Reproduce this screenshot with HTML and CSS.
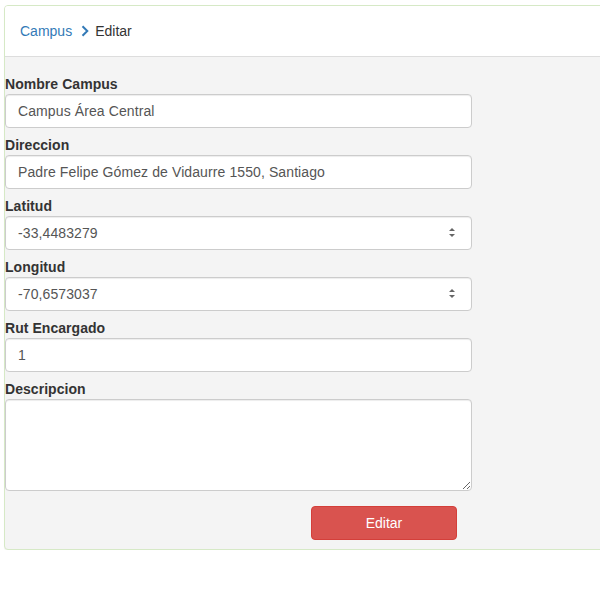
FILE: index.html
```html
<!DOCTYPE html>
<html lang="es">
<head>
<meta charset="utf-8">
<title>Editar Campus</title>
<link rel="stylesheet" href="styles.css">
</head>
<body>
<div class="panel">
  <div class="panel-heading">
    <a class="crumb-link" href="#">Campus</a>
    <svg class="chevron" width="8" height="12" viewBox="0 0 8 12"><path d="M1.5 1.2 L6.3 6 L1.5 10.8" fill="none" stroke="#337ab7" stroke-width="2"/></svg>
    <span class="crumb-current">Editar</span>
  </div>
  <div class="panel-body">
    <form class="form">
      <div class="form-group">
        <label class="label">Nombre Campus</label>
        <input class="control" type="text" value="Campus Área Central">
      </div>
      <div class="form-group">
        <label class="label">Direccion</label>
        <input class="control" type="text" value="Padre Felipe Gómez de Vidaurre 1550, Santiago">
      </div>
      <div class="form-group">
        <label class="label">Latitud</label>
        <div class="number-wrap">
          <input class="control" type="text" value="-33,4483279">
          <span class="spin"><span class="spin-up"></span><span class="spin-down"></span></span>
        </div>
      </div>
      <div class="form-group">
        <label class="label">Longitud</label>
        <div class="number-wrap">
          <input class="control" type="text" value="-70,6573037">
          <span class="spin"><span class="spin-up"></span><span class="spin-down"></span></span>
        </div>
      </div>
      <div class="form-group">
        <label class="label">Rut Encargado</label>
        <input class="control" type="text" value="1">
      </div>
      <div class="form-group">
        <label class="label">Descripcion</label>
        <textarea class="control area"></textarea>
      </div>
      <div class="actions">
        <button class="btn-danger" type="button">Editar</button>
      </div>
    </form>
  </div>
</div>
</body>
</html>
```
FILE: styles.css
```css
html, body {
  margin: 0;
  padding: 0;
  overflow: hidden;
  background: #fff;
}
body {
  font-family: "Liberation Sans", Arial, sans-serif;
  font-size: 14px;
  line-height: 20px;
  color: #333;
  padding: 5px 0 0 4px;
}
.panel {
  width: 640px;
  border: 1px solid #d6e9c6;
  border-radius: 4px;
  background: #f4f4f4;
  box-shadow: 0 1px 1px rgba(0, 0, 0, 0.05);
}
.panel-heading {
  background: #fff;
  height: 20px;
  padding: 15px 15px;
  border-bottom: 1px solid #ddd;
  border-radius: 3px 3px 0 0;
  display: flex;
  align-items: center;
}
.crumb-link {
  color: #337ab7;
  text-decoration: none;
}
.chevron {
  margin: 0 6px 0 9px;
}
.crumb-current {
  color: #333;
}
.panel-body {
  padding: 17px 0 9px 0;
}
.form {
  width: 467px;
  margin: 0;
}
.form-group {
  margin-bottom: 7px;
}
.label {
  display: block;
  font-weight: bold;
  margin-bottom: 0;
  height: 20px;
  letter-spacing: 0.05px;
}
.control {
  display: block;
  box-sizing: border-box;
  width: 467px;
  height: 34px;
  padding: 6px 12px;
  font-family: "Liberation Sans", Arial, sans-serif;
  font-size: 14px;
  line-height: 20px;
  letter-spacing: 0.1px;
  color: #555;
  background: #fff;
  border: 1px solid #ccc;
  border-radius: 4px;
  box-shadow: inset 0 1px 1px rgba(0, 0, 0, 0.075);
  margin: 0;
}
.area {
  height: 92px;
  resize: vertical;
}
.number-wrap {
  position: relative;
}
.spin {
  position: absolute;
  left: 444px;
  top: 12px;
  display: flex;
  flex-direction: column;
  gap: 3px;
}
.spin-up {
  width: 0;
  height: 0;
  border-left: 3px solid transparent;
  border-right: 3px solid transparent;
  border-bottom: 3px solid #666;
}
.spin-down {
  width: 0;
  height: 0;
  border-left: 3px solid transparent;
  border-right: 3px solid transparent;
  border-top: 3px solid #666;
}
.actions {
  padding-top: 8px;
  padding-left: 306px;
}
.btn-danger {
  display: block;
  box-sizing: border-box;
  width: 146px;
  height: 34px;
  padding: 6px 12px;
  font-family: "Liberation Sans", Arial, sans-serif;
  font-size: 14px;
  line-height: 20px;
  color: #fff;
  background: #d9534f;
  border: 1px solid #d43f3a;
  border-radius: 4px;
}
```
